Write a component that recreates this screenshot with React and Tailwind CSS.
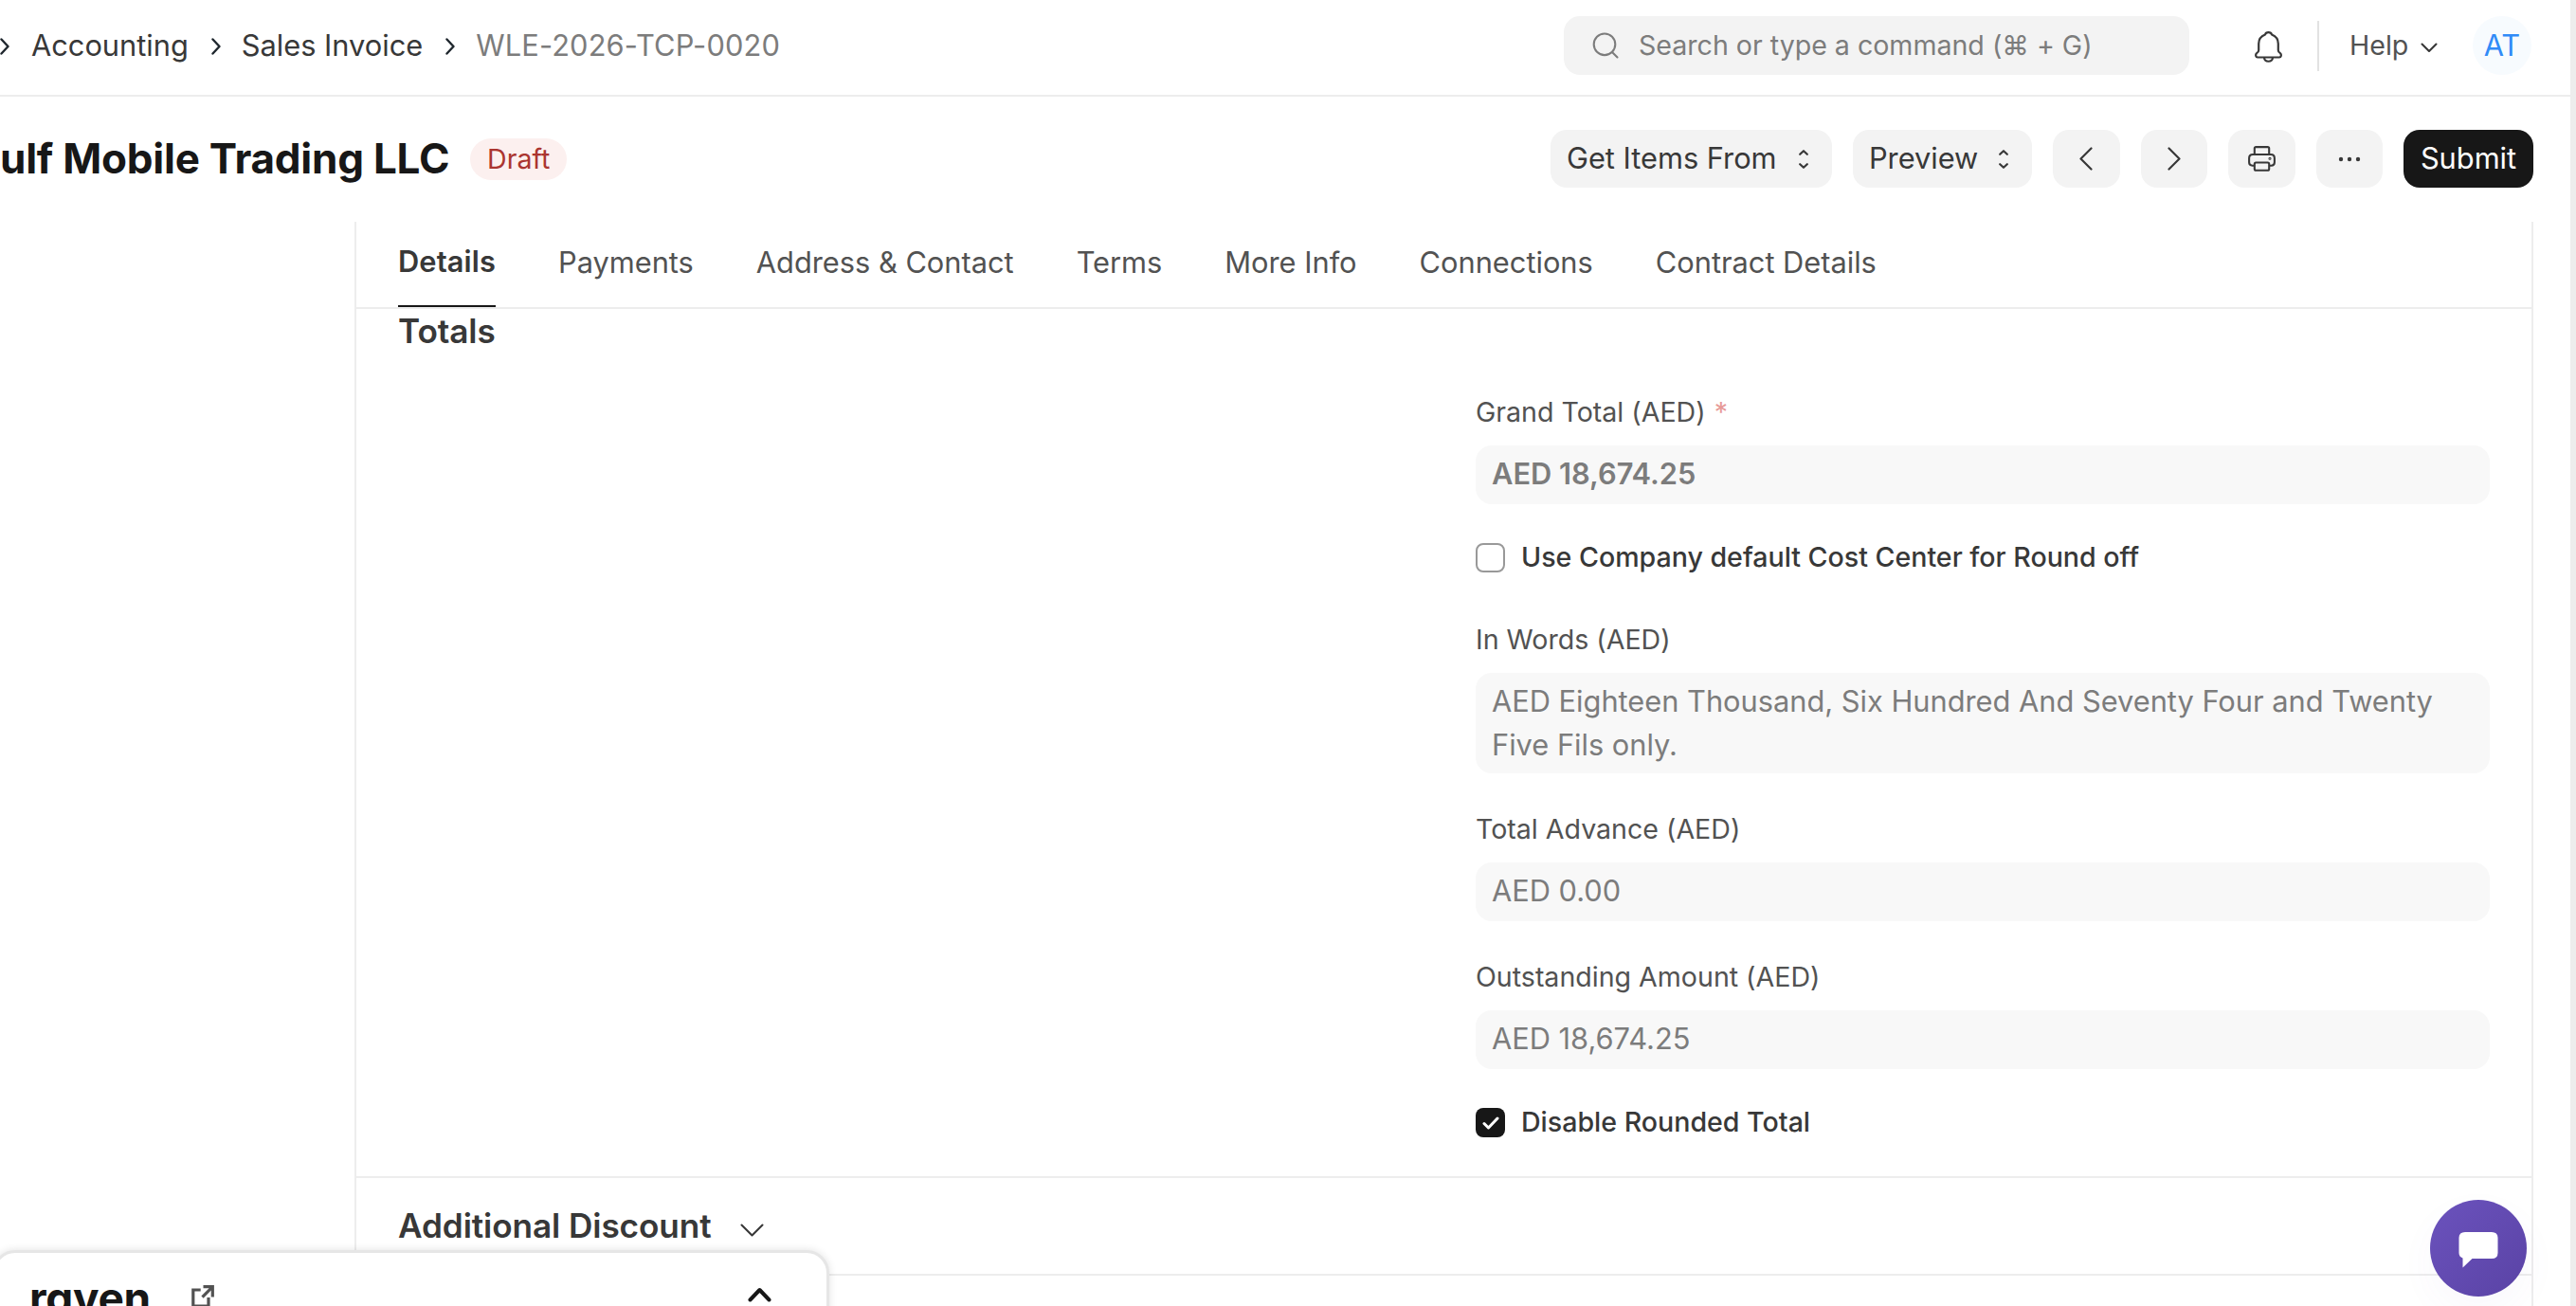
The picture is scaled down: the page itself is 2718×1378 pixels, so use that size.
import React from 'react';

const INTER = "font-['Inter','Liberation_Sans',sans-serif]";

const TABS = ['Details', 'Payments', 'Address & Contact', 'Terms', 'More Info', 'Connections', 'Contract Details'];

const Stroke = ({ d, className, viewBox, width = 2.2 }) => (
    <svg className={`shrink-0 ${className}`} viewBox={viewBox} fill="none" stroke="currentColor" strokeWidth={width} strokeLinecap="round" strokeLinejoin="round">
        <path d={d} />
    </svg>
);

const CrumbArrow = () => (
    <Stroke className="w-[10px] h-[18px] text-[#1f272e]" viewBox="0 0 10 18" width={2.4} d="M1.5 1.5L8.5 9L1.5 16.5" />
);

const UpDown = () => (
    <Stroke className="w-[10px] h-[20px]" viewBox="0 0 10 20" d="M1.2 4.8L5 1.2L8.8 4.8M1.2 15.2L5 18.8L8.8 15.2" />
);

const MenuButton = ({ label, className }) => (
    <button className={`h-[61px] rounded-[17px] bg-[#f3f3f3] flex items-center justify-between pl-[16.5px] pr-[25px] ${className}`}>
        <span>{label}</span>
        <UpDown />
    </button>
);

const IconButton = ({ children }) => (
    <button className="h-[61px] w-[70.4px] rounded-[17px] bg-[#f3f3f3] flex items-center justify-center">{children}</button>
);

const Field = ({ label, required, bold, tall, children }) => (
    <div>
        <div className="h-[36px] leading-[36px] text-[28.6px] text-[#525252]">
            {label}
            {required && <span className="text-[#e79a97] ml-[9px]">*</span>}
        </div>
        <div className={`mt-[17px] rounded-[17px] bg-[#f8f8f8] px-[17px] text-[30.8px] text-[#7c7c7c] ${tall ? 'h-[106px] py-[7px] leading-[46px]' : 'h-[62px] leading-[60px]'} ${bold ? 'font-semibold' : ''}`}>
            {children}
        </div>
    </div>
);

const Check = ({ label, checked }) => (
    <div className="flex items-center h-[37px] text-[28.6px] font-medium text-[#383838]">
        <span className={`w-[31px] h-[31px] rounded-[8px] mr-[17px] flex items-center justify-center ${checked ? 'bg-[#171717] text-white' : 'border-2 border-[#999999]'}`}>
            {checked && <Stroke className="w-[18px] h-[14px]" viewBox="0 0 18 14" width={3} d="M2 7.5L6.5 12L16 2" />}
        </span>
        {label}
    </div>
);

const Navbar = () => (
    <header className="h-[102px] border-b-2 border-[#ededed] flex items-center justify-between text-[30.8px] text-[#383838] shrink-0">
        <nav className="flex items-center pb-[3px]">
            <CrumbArrow />
            <span className="ml-[23px]">Accounting</span>
            <span className="ml-[24px] mr-[22px] flex"><CrumbArrow /></span>
            <span>Sales Invoice</span>
            <span className="ml-[24px] mr-[22px] flex"><CrumbArrow /></span>
            <span className="text-[#7c7c7c] tracking-[0.15px]">WLE-2026-TCP-0020</span>
        </nav>
        <div className="flex items-center pb-[4px] pr-[41px]">
            <div className="w-[660px] h-[62px] rounded-[17px] bg-[#f3f3f3] flex items-center pl-[30px] text-[#7c7c7c]">
                <Stroke className="w-[28px] h-[28px] mr-[21px]" viewBox="0 0 28 28" width={2.1} d="M13 1.5A11.3 11.3 0 1 1 13 24.1A11.3 11.3 0 1 1 13 1.5M21 21L26.5 26.5" />
                <span className="text-[28.6px]">Search or type a command (⌘ + G)</span>
            </div>
            <Stroke
                className="w-[29px] h-[33px] ml-[69px] mt-[2px]"
                viewBox="0 0 29 33"
                d="M4.2 20V13C4.2 8 7.5 5 11 3.6C11.8 .4 17.2 .4 18 3.6C21.5 5 24.8 8 24.8 13V20C24.8 22 26 22.6 27.2 23.4C28.3 24.6 28 27.5 26 27.5H3C1 27.5 .7 24.6 1.8 23.4C3 22.6 4.2 22 4.2 20ZM10 28C10.5 33 18.5 33 19 28"
            />
            <div className="w-[2px] h-[53px] bg-[#e2e2e2] ml-[37px]" />
            <span className="ml-[32px] w-[75px] text-[28.6px] text-[#525252]">Help</span>
            <Stroke className="w-[18px] h-[11px] mt-[5px]" viewBox="0 0 18 11" width={2.1} d="M1.5 1.5L9 9L16.5 1.5" />
            <div className="ml-[37px] w-[62px] h-[62px] rounded-full bg-[#f7fbfe] text-[#318bf7] flex items-center justify-center">AT</div>
        </div>
    </header>
);

const PageHead = () => (
    <div className="h-[132px] pb-[1px] flex items-center justify-between pr-[39px] text-[30.8px] text-[#383838] shrink-0">
        <div className="flex items-center">
            <h1 className="text-[44px] font-bold tracking-[-0.24px] text-[#171717] mb-[2px]">ulf Mobile Trading LLC</h1>
            <span className="ml-[22px] w-[102px] text-center h-[44px] rounded-full bg-[#fcf0ef] text-[#ab3530] text-[28.6px] leading-[43px]">Draft</span>
        </div>
        <div className="flex items-center gap-[22px]">
            <MenuButton label="Get Items From" className="w-[297px]" />
            <MenuButton label="Preview" className="w-[189px]" />
            <IconButton><Stroke className="w-[14px] h-[25px] mr-[2px]" viewBox="0 0 14 25" d="M12.5 1.5L1.5 12.5L12.5 23.5" /></IconButton>
            <IconButton><Stroke className="w-[14px] h-[25px]" viewBox="0 0 14 25" d="M1.5 1.5L12.5 12.5L1.5 23.5" /></IconButton>
            <IconButton>
                <svg className="w-[29px] h-[27px]" viewBox="0 0 29 27" fill="none" stroke="currentColor" strokeWidth="2.1" strokeLinejoin="round">
                    <path d="M6.8 9V2.6Q6.8 1.1 8.3 1.1H20.7Q22.2 1.1 22.2 2.6V9M6.8 20.7H4.5Q1.1 20.7 1.1 17.3V13Q1.1 9 5 9H24Q27.9 9 27.9 13V17.3Q27.9 20.7 24.5 20.7H22.2M8.3 17.5H20.7Q22.2 17.5 22.2 19V24.3Q22.2 25.8 20.7 25.8H8.3Q6.8 25.8 6.8 24.3V19Q6.8 17.5 8.3 17.5Z" />
                    <circle cx="23" cy="13.2" r="0.5" />
                </svg>
            </IconButton>
            <IconButton>
                <svg className="w-[24px] h-[6px]" viewBox="0 0 24 6" fill="currentColor"><circle cx="3" cy="3" r="2.2" /><circle cx="12" cy="3" r="2.2" /><circle cx="21" cy="3" r="2.2" /></svg>
            </IconButton>
            <button className="h-[61px] w-[137px] rounded-[17px] bg-[#171717] text-white">Submit</button>
        </div>
    </div>
);

const RavenPanel = () => (
    <div className="absolute left-[-8px] top-[1319px] w-[883px] h-[100px] rounded-t-[24px] border-[3px] border-[#e6e6e6] bg-white shadow-[0_0_8px_rgba(0,0,0,0.12)] flex items-start">
        <div className="ml-[36px] mt-[19px] w-[171px] text-[46px] leading-[56px] font-bold text-[#171717] tracking-[-0.3px] [font-feature-settings:'cv11']">raven</div>
        <svg className="mt-[34px] w-[24px] h-[24px] text-[#525252]" viewBox="0 0 24 24" fill="none" stroke="currentColor" strokeWidth="3.2">
            <path d="M9.7 5H1.8V22H18V13M12.5 1.7H22.3V12.5M22 2L11.5 12.7" />
        </svg>
        <Stroke className="ml-auto mr-[58px] mt-[36px] w-[25px] h-[16px] text-[#171717]" viewBox="0 0 25 16" width={4} d="M2.5 13.5L12.5 3L22.5 13.5" />
    </div>
);

export default function App() {
    return (
        <div className={`relative w-[2718px] h-[1378px] overflow-hidden bg-white flex tracking-[-0.015px] ${INTER}`}>
            <div className="w-[2712px] flex flex-col">
                <Navbar />
                <PageHead />
                <main className="flex-1 ml-[374px] mr-[39px] border-x-2 border-[#ededed]">
                    <div className="h-[92px] border-b-2 border-[#ededed] flex gap-[66px] pl-[44px] text-[30.8px] text-[#525252]">
                        {TABS.map((tab, i) => (
                            <div key={tab} className={i === 0 ? 'h-[90px] w-[103px] leading-[83px] border-b-2 border-[#171717] font-semibold text-[#383838] tracking-[0.1px]' : 'h-[90px] leading-[86px]'}>{tab}</div>
                        ))}
                    </div>
                    <section className="h-[917px] border-b-2 border-[#ededed] px-[44px] flex">
                        <h2 className="flex-1 text-[35.2px] leading-[47px] font-semibold text-[#383838] tracking-[-0.1px]">Totals</h2>
                        <div className="w-[1070px] pt-[91px] flex flex-col">
                            <Field label="Grand Total (AED)" required bold>AED 18,674.25</Field>
                            <div className="mt-[38px]"><Check label="Use Company default Cost Center for Round off" /></div>
                            <div className="mt-[50px]"><Field label="In Words (AED)" tall>AED Eighteen Thousand, Six Hundred And Seventy Four and Twenty Five Fils only.</Field></div>
                            <div className="mt-[41px]"><Field label="Total Advance (AED)">AED 0.00</Field></div>
                            <div className="mt-[41px]"><Field label="Outstanding Amount (AED)">AED 18,674.25</Field></div>
                            <div className="mt-[38px]"><Check label="Disable Rounded Total" checked /></div>
                        </div>
                    </section>
                    <section className="h-[103px] border-b-2 border-[#ededed] px-[44px] flex items-center">
                        <h2 className="text-[35.2px] font-semibold text-[#383838] tracking-[-0.1px]">Additional Discount</h2>
                        <Stroke className="w-[25px] h-[14px] ml-[30px] mt-[8px] text-[#383838]" viewBox="0 0 25 14" width={2.1} d="M1.5 1.5L12.5 12.5L23.5 1.5" />
                    </section>
                </main>
            </div>
            <div className="w-[6px] bg-[#ededed]" />
            <RavenPanel />
            <div className="absolute left-[2564px] top-[1266px] w-[102px] h-[102px] rounded-full bg-linear-to-br from-[#6b52bd] to-[#5a43a5] shadow-[0_16px_40px_rgba(100,80,180,0.04)]">
                <svg className="w-[102px] h-[102px]" viewBox="0 0 102 102" fill="white">
                    <path d="M37 34H65Q71.5 34 71.5 40V56Q71.5 62 65 62H44.5L34.5 71.5V61.5Q30.5 60 30.5 56V40Q30.5 34 37 34Z" />
                </svg>
            </div>
        </div>
    );
}
